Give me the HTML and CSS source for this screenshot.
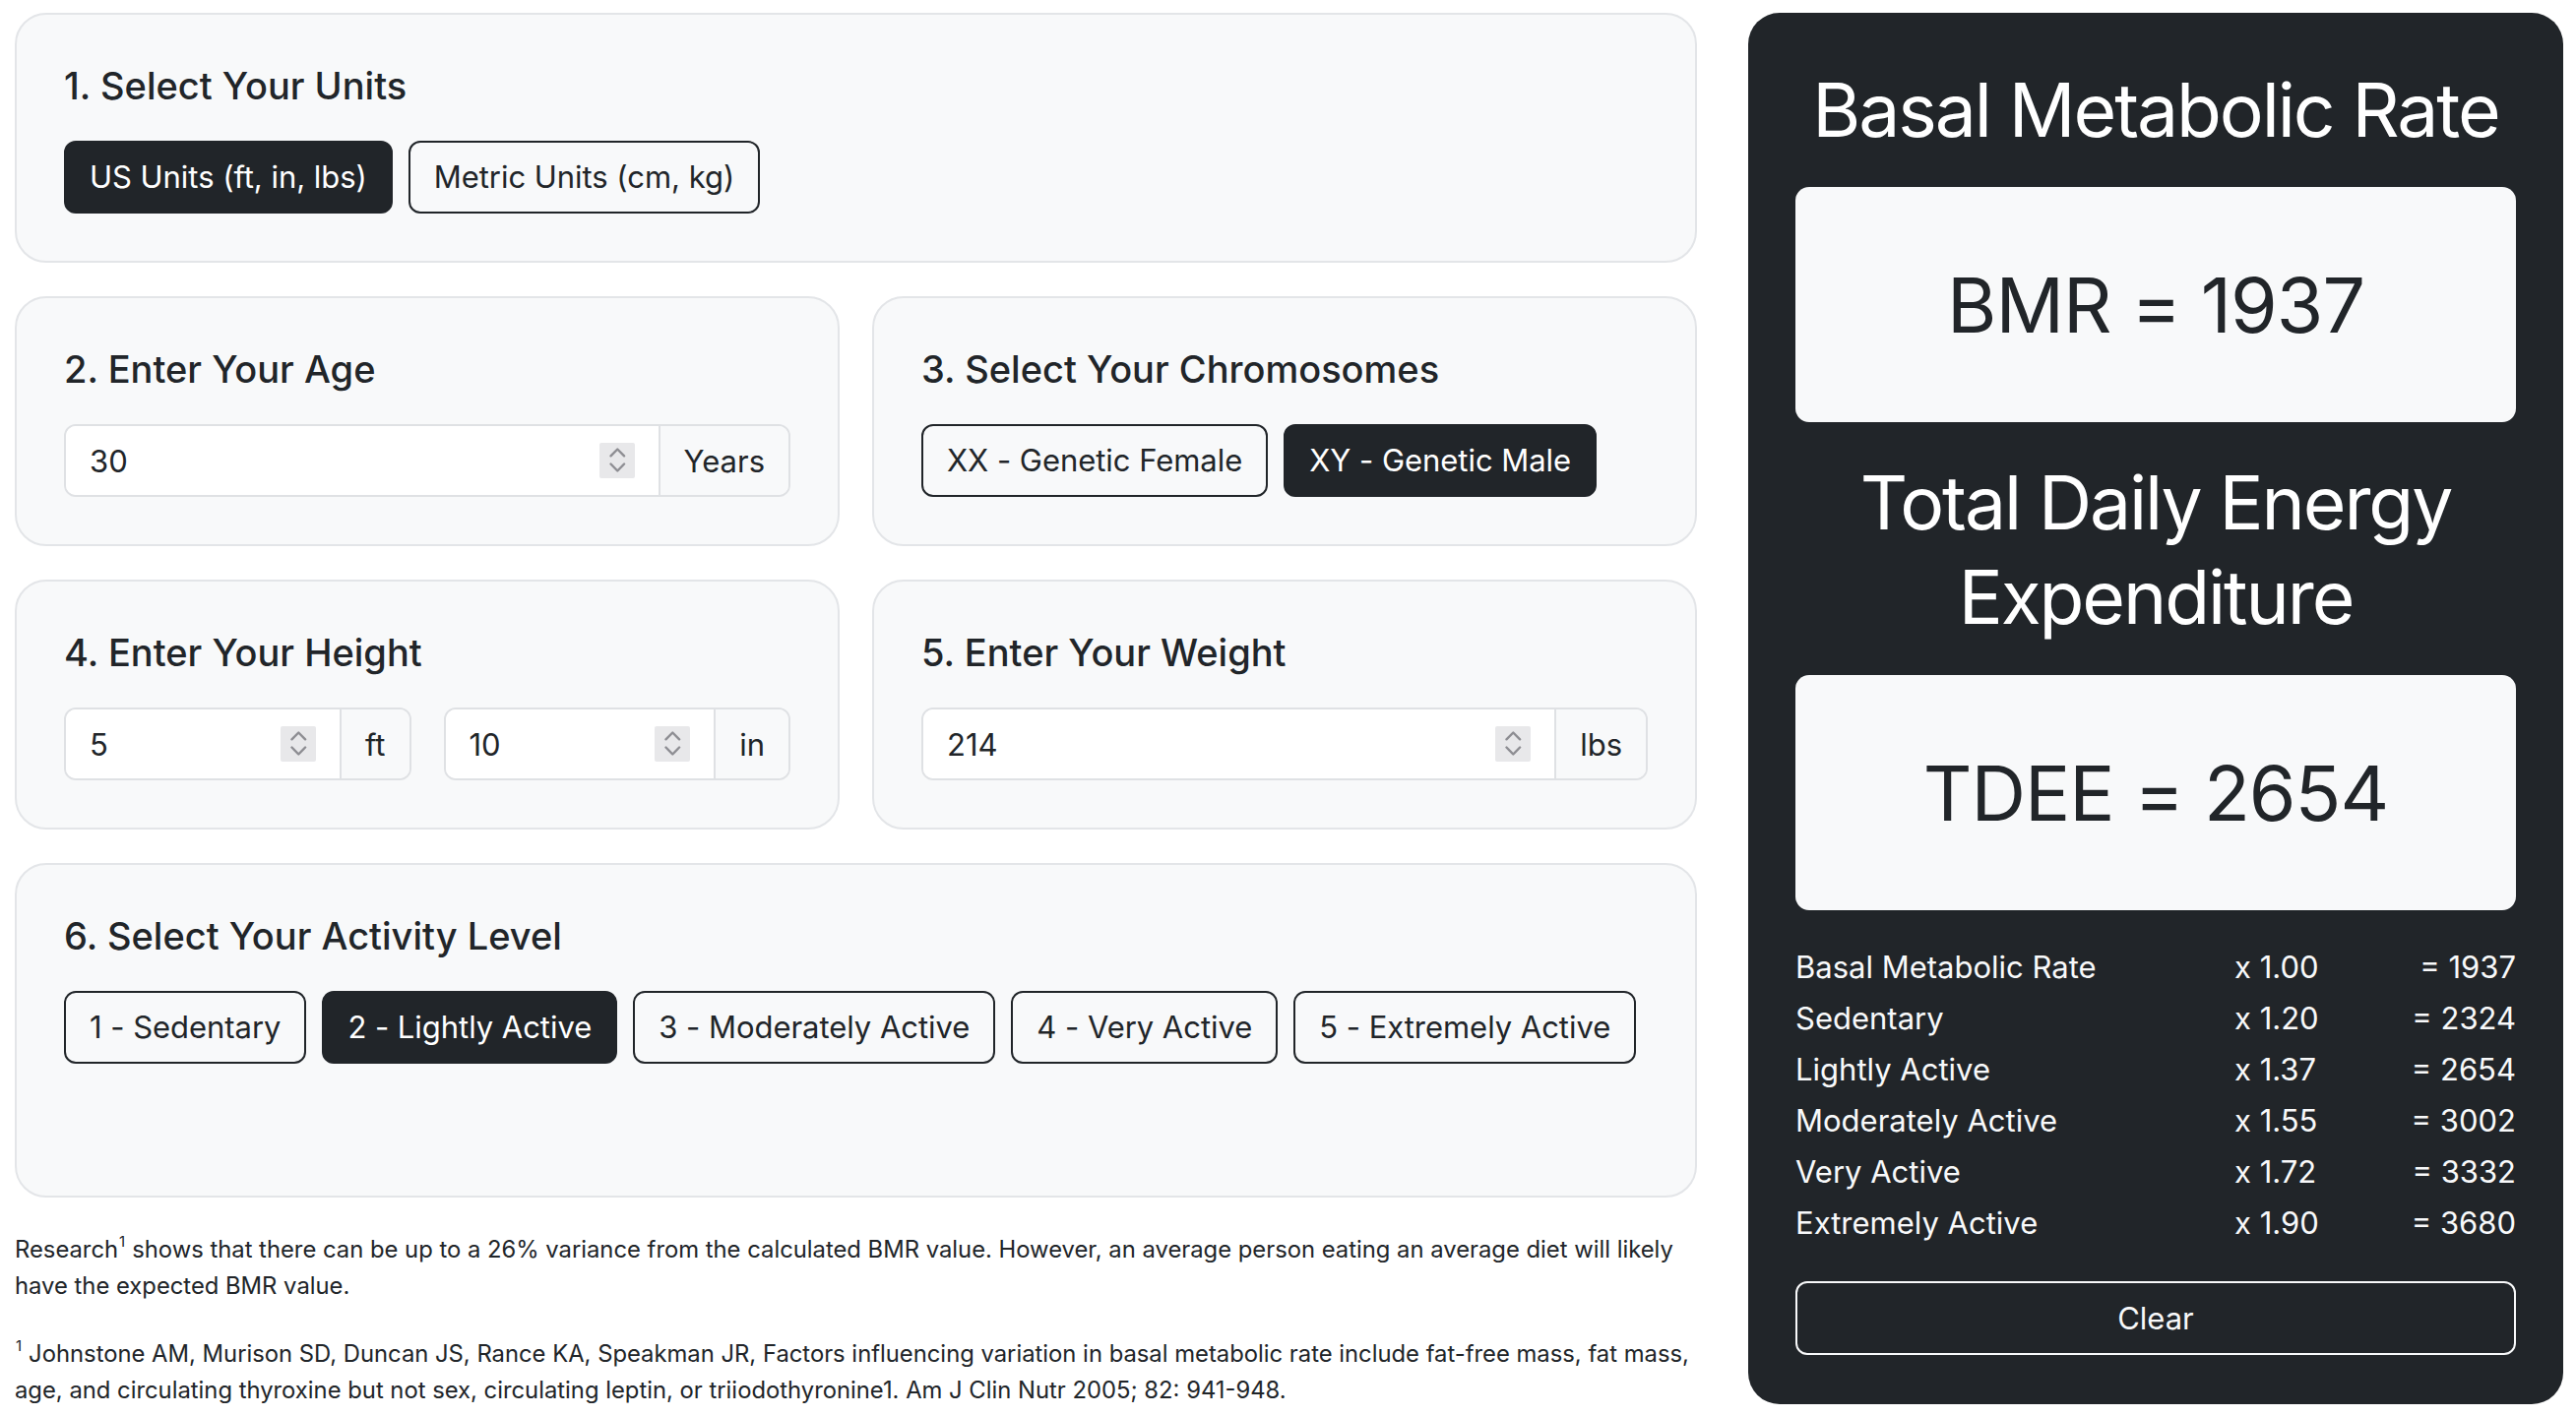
FILE: index.html
```html
<!DOCTYPE html>
<html lang="en">
<head>
<meta charset="utf-8">
<title>BMR &amp; TDEE Calculator</title>
<link rel="stylesheet" href="styles.css">
</head>
<body>
<div class="page">
  <main class="calc">
    <section class="card">
      <h2 class="step-title">1. Select Your Units</h2>
      <div class="btn-row">
        <button class="btn btn-dark">US Units (ft, in, lbs)</button>
        <button class="btn btn-outline">Metric Units (cm, kg)</button>
      </div>
    </section>

    <div class="card-pair">
      <section class="card">
        <h2 class="step-title">2. Enter Your Age</h2>
        <div class="input-group">
          <div class="field">
            <input type="number" value="30">
            <svg class="spin" viewBox="0 0 36 36"><path d="M11.5 13.3 L18.3 6.5 L25.1 13.3 M11.5 21.5 L18.3 28.5 L25.1 21.5"/></svg>
          </div>
          <span class="addon">Years</span>
        </div>
      </section>
      <section class="card">
        <h2 class="step-title">3. Select Your Chromosomes</h2>
        <div class="btn-row">
          <button class="btn btn-outline">XX - Genetic Female</button>
          <button class="btn btn-dark">XY - Genetic Male</button>
        </div>
      </section>
    </div>

    <div class="card-pair">
      <section class="card">
        <h2 class="step-title">4. Enter Your Height</h2>
        <div class="input-pair">
          <div class="input-group">
            <div class="field">
              <input type="number" value="5">
              <svg class="spin" viewBox="0 0 36 36"><path d="M11.5 13.3 L18.3 6.5 L25.1 13.3 M11.5 21.5 L18.3 28.5 L25.1 21.5"/></svg>
            </div>
            <span class="addon">ft</span>
          </div>
          <div class="input-group">
            <div class="field">
              <input type="number" value="10">
              <svg class="spin" viewBox="0 0 36 36"><path d="M11.5 13.3 L18.3 6.5 L25.1 13.3 M11.5 21.5 L18.3 28.5 L25.1 21.5"/></svg>
            </div>
            <span class="addon">in</span>
          </div>
        </div>
      </section>
      <section class="card">
        <h2 class="step-title">5. Enter Your Weight</h2>
        <div class="input-group">
          <div class="field">
            <input type="number" value="214">
            <svg class="spin" viewBox="0 0 36 36"><path d="M11.5 13.3 L18.3 6.5 L25.1 13.3 M11.5 21.5 L18.3 28.5 L25.1 21.5"/></svg>
          </div>
          <span class="addon">lbs</span>
        </div>
      </section>
    </div>

    <section class="card card-activity">
      <h2 class="step-title">6. Select Your Activity Level</h2>
      <div class="btn-row">
        <button class="btn btn-outline">1 - Sedentary</button>
        <button class="btn btn-dark">2 - Lightly Active</button>
        <button class="btn btn-outline">3 - Moderately Active</button>
        <button class="btn btn-outline">4 - Very Active</button>
        <button class="btn btn-outline">5 - Extremely Active</button>
      </div>
    </section>

    <div class="notes">
      <p class="note"><span>Research</span><sup>1</sup><span>shows that there can be up to a 26% variance from the calculated BMR value. However, an average person eating an average diet will likely</span> <span>have the expected BMR value.</span></p>
      <p class="note"><sup>1</sup><span>Johnstone AM, Murison SD, Duncan JS, Rance KA, Speakman JR, Factors influencing variation in basal metabolic rate include fat-free mass, fat mass,</span> <span>age, and circulating thyroxine but not sex, circulating leptin, or triiodothyronine1. Am J Clin Nutr 2005; 82: 941-948.</span></p>
    </div>
  </main>

  <aside class="results">
    <h1 class="res-title">Basal Metabolic Rate</h1>
    <div class="res-box">BMR = 1937</div>
    <h1 class="res-title res-title-tdee">Total Daily Energy Expenditure</h1>
    <div class="res-box">TDEE = 2654</div>
    <div class="breakdown">
      <span>Basal Metabolic Rate</span><span>x 1.00</span><span class="val">= 1937</span>
      <span>Sedentary</span><span>x 1.20</span><span class="val">= 2324</span>
      <span>Lightly Active</span><span>x 1.37</span><span class="val">= 2654</span>
      <span>Moderately Active</span><span>x 1.55</span><span class="val">= 3002</span>
      <span>Very Active</span><span>x 1.72</span><span class="val">= 3332</span>
      <span>Extremely Active</span><span>x 1.90</span><span class="val">= 3680</span>
    </div>
    <button class="btn-clear">Clear</button>
  </aside>
</div>
</body>
</html>
```

FILE: styles.css
```css
* { box-sizing: border-box; }

html, body {
  margin: 0;
  padding: 0;
  background: #ffffff;
}

body {
  font-family: Inter, "Liberation Sans", Arial, sans-serif;
  color: #212529;
}

.page {
  display: grid;
  grid-template-columns: 1709px 828px;
  column-gap: 52px;
  align-items: start;
  padding: 13px 13px 0 15px;
}

.calc {
  display: flex;
  flex-direction: column;
  gap: 34px;
}

.card {
  background: #f8f9fa;
  border: 2px solid #e3e5e8;
  border-radius: 32px;
  padding: 48px;
}

.card-activity {
  padding-bottom: 134px;
}

.card-pair {
  display: grid;
  grid-template-columns: 1fr 1fr;
  column-gap: 33px;
}

.step-title {
  margin: 0 0 32px;
  font-size: 38px;
  line-height: 48px;
  font-weight: 500;
  color: #212529;
}

.btn-row {
  display: flex;
  gap: 16px;
}

.btn {
  display: inline-flex;
  align-items: center;
  height: 74px;
  padding: 0 24px;
  border: 2px solid #212529;
  border-radius: 12px;
  font-family: inherit;
  font-size: 31px;
  font-weight: 400;
  line-height: 1.5;
  letter-spacing: -0.04px;
  cursor: pointer;
}

.btn-dark {
  background: #212529;
  color: #ffffff;
}

.btn-outline {
  background: transparent;
  color: #212529;
}

.input-group {
  display: flex;
  height: 74px;
  border: 2px solid #dfe1e4;
  border-radius: 12px;
  overflow: hidden;
  background: #ffffff;
}

.input-pair {
  display: grid;
  grid-template-columns: 1fr 1fr;
  column-gap: 33px;
}

.field {
  flex: 1;
  min-width: 0;
  display: flex;
  align-items: center;
  padding: 0 24px;
  background: #ffffff;
}

.field input {
  flex: 1;
  min-width: 0;
  border: 0;
  outline: none;
  background: transparent;
  padding: 0;
  font-family: inherit;
  font-size: 31px;
  color: #212529;
  -moz-appearance: textfield;
}

.field input::-webkit-inner-spin-button,
.field input::-webkit-outer-spin-button {
  -webkit-appearance: none;
  margin: 0;
}

.spin {
  flex: none;
  width: 36px;
  height: 36px;
  background: #e8e8ea;
  border-radius: 2px;
}

.spin path {
  fill: none;
  stroke: #8e8e93;
  stroke-width: 2.4;
  stroke-linecap: round;
  stroke-linejoin: round;
}

.addon {
  display: flex;
  align-items: center;
  padding: 0 24px;
  background: #f8f9fa;
  border-left: 2px solid #dfe1e4;
  font-size: 31px;
  color: #212529;
}

.notes {
  display: flex;
  flex-direction: column;
  gap: 32px;
}

.note {
  margin: 0;
  font-size: 23.8px;
  line-height: 37px;
  color: #212529;
}

.note sup {
  display: inline-block;
  font-size: 15px;
  line-height: 15px;
  vertical-align: 11px;
  margin: 0 7px 0 1px;
}

.results {
  background: #212529;
  border-radius: 32px;
  padding: 51px 48px 50px;
  color: #ffffff;
}

.res-title {
  margin: 0 0 30px;
  font-size: 75px;
  line-height: 96px;
  font-weight: 400;
  letter-spacing: -2.1px;
  text-align: center;
  color: #ffffff;
}

.res-title-tdee {
  margin: 34px 0 31px;
}

.res-box {
  height: 239px;
  display: flex;
  align-items: center;
  justify-content: center;
  background: #f8f9fa;
  border-radius: 14px;
  font-size: 77px;
  font-weight: 400;
  letter-spacing: -1px;
  color: #212529;
}

.breakdown {
  margin-top: 32px;
  display: grid;
  grid-template-columns: 446px 1fr auto;
  font-size: 31px;
  line-height: 52px;
  color: #f8f9fa;
}

.breakdown .val {
  text-align: right;
}

.btn-clear {
  display: block;
  width: 100%;
  height: 75px;
  margin-top: 33px;
  background: transparent;
  border: 2px solid #f8f9fa;
  border-radius: 12px;
  color: #f8f9fa;
  font-family: inherit;
  font-size: 31px;
  cursor: pointer;
}
```
